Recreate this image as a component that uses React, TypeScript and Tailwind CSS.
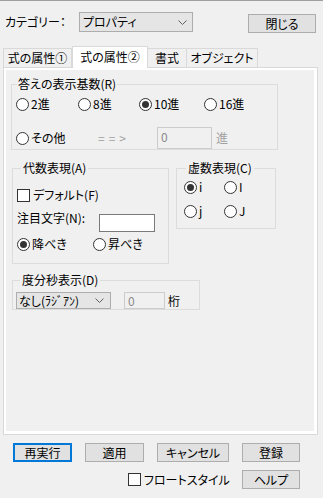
import React from "react";

function Chevron() {
  return (
    <svg width="9" height="5" viewBox="0 0 9 5" className="shrink-0">
      <path d="M0.5 0.5 L4.5 4.5 L8.5 0.5" stroke="#606060" strokeWidth="1" fill="none" />
    </svg>
  );
}

function Radio({ label, checked = false, className = "" }: { label: string; checked?: boolean; className?: string }) {
  return (
    <div className={`flex items-center shrink-0 ${className}`}>
      <span className="w-[13px] h-[13px] rounded-full border border-[#333333] bg-white flex items-center justify-center shrink-0">
        {checked && <span className="w-[7px] h-[7px] rounded-full bg-[#333333]" />}
      </span>
      <span className="ml-[2px] leading-[16px] whitespace-nowrap">{label}</span>
    </div>
  );
}

function Check({ label, className = "" }: { label: string; className?: string }) {
  return (
    <div className={`flex items-center shrink-0 ${className}`}>
      <span className="w-[13px] h-[13px] border border-[#333333] bg-white shrink-0" />
      <span className="ml-[3px] leading-[16px] whitespace-nowrap">{label}</span>
    </div>
  );
}

function Btn({ label, className = "", def = false }: { label: string; className?: string; def?: boolean }) {
  return (
    <div
      className={`h-[19px] flex items-center justify-center bg-[#e1e1e1] leading-[16px] whitespace-nowrap shrink-0 ${
        def ? "border-2 border-[#0078d7]" : "border border-[#adadad]"
      } ${className}`}
    >
      {label}
    </div>
  );
}

export default function App() {
  return (
    <div className="w-[323px] h-[498px] bg-[#f0f0f0] border-t border-[#a0a0a0] text-[12px] text-black [font-family:'Noto_Sans_CJK_JP',sans-serif] [font-feature-settings:'palt'] flex flex-col overflow-hidden">
      {/* top row */}
      <div className="flex items-start pl-[5px]">
        <div className="mt-[11px] h-[20px] leading-[20px] w-[74px] whitespace-nowrap">カテゴリー：</div>
        <div className="mt-[11px] w-[114px] h-[20px] border border-[#adadad] bg-[#e5e5e5] flex items-center justify-between pl-[3px] pr-[5px]">
          <span className="leading-[16px]">プロパティ</span>
          <Chevron />
        </div>
        <Btn label="閉じる" className="mt-[13px] ml-[55px] w-[68px]" />
      </div>

      {/* tabs */}
      <div className="flex items-end mt-[13px] ml-[3px] h-[22px] relative z-10">
        <div className="w-[69px] h-[19px] mb-[1px] border-t border-l border-r border-[#d9d9d9] bg-[#f0f0f0] flex items-center justify-center leading-[16px] whitespace-nowrap">
          式の属性①
        </div>
        <div className="w-[76px] h-[22px] border-t border-l border-r border-[#d9d9d9] bg-white flex items-center justify-center leading-[16px] pb-[2px] whitespace-nowrap">
          式の属性②
        </div>
        <div className="w-[39px] h-[19px] mb-[1px] border-t border-r border-[#d9d9d9] bg-[#f0f0f0] flex items-center justify-center leading-[16px] whitespace-nowrap">
          書式
        </div>
        <div className="w-[71px] h-[19px] mb-[1px] border-t border-r border-[#d9d9d9] bg-[#f0f0f0] flex items-center justify-center leading-[16px] whitespace-nowrap">
          オブジェクト
        </div>
      </div>

      {/* panel */}
      <div className="-mt-[1px] ml-[3px] w-[315px] h-[368px] border border-[#d9d9d9] bg-white pt-[2px] pl-[2px] pr-[3px] pb-[3px]">
        <div className="w-full h-full bg-[#f0f0f0] flex flex-col items-start">
          {/* group 1 */}
          <fieldset className="mt-[6px] ml-[5px] w-[267px] border border-[#dcdcdc] pl-[4px]">
            <legend className="ml-[1px] px-[1px] leading-[16px]">答えの表示基数(R)</legend>
            <div className="mt-[2px] h-[20px] flex items-center">
              <Radio label="2進" className="w-[62px]" />
              <Radio label="8進" className="w-[61px]" />
              <Radio label="10進" checked className="w-[65px]" />
              <Radio label="16進" />
            </div>
            <div className="mt-[13px] h-[22px] flex items-center">
              <Radio label="その他" className="w-[82px]" />
              <div className="w-[59px] text-[#a0a0a0] tracking-[4px] leading-[16px]">==&gt;</div>
              <div className="w-[55px] h-[22px] border border-[#cccccc] bg-[#f0f0f0] text-[#8a8a8a] pl-[3px] leading-[18px]">0</div>
              <div className="ml-[4px] text-[#a0a0a0] leading-[16px]">進</div>
            </div>
          </fieldset>

          {/* groups 2 & 3 */}
          <div className="mt-[10px] flex items-start">
            <fieldset className="ml-[6px] w-[157px] border border-[#dcdcdc] pl-[4px] pb-[9px]">
              <legend className="ml-[4px] px-[2px] leading-[16px]">代数表現(A)</legend>
              <div className="mt-[9px] h-[20px] flex items-center">
                <Check label="デフォルト(F)" />
              </div>
              <div className="mt-[5px] flex items-start">
                <div className="w-[82px] leading-[16px] whitespace-nowrap">注目文字(N):</div>
                <div className="mt-[4px] w-[56px] h-[18px] border border-[#7a7a7a] bg-white" />
              </div>
              <div className="mt-[2px] h-[20px] flex items-center">
                <Radio label="降べき" checked className="w-[76px]" />
                <Radio label="昇べき" />
              </div>
            </fieldset>
            <fieldset className="ml-[7px] w-[100px] border border-[#dcdcdc] pl-[7px] pb-[7px]">
              <legend className="ml-[2px] px-[2px] leading-[16px]">虚数表現(C)</legend>
              <div className="mt-[1px] h-[20px] flex items-center">
                <Radio label="i" checked className="w-[40px]" />
                <Radio label="I" />
              </div>
              <div className="mt-[4px] h-[20px] flex items-center">
                <Radio label="j" className="w-[40px]" />
                <Radio label="J" />
              </div>
            </fieldset>
          </div>

          {/* group 4 */}
          <fieldset className="mt-[8px] ml-[6px] w-[188px] border border-[#dcdcdc] pl-[3px]">
            <legend className="ml-[4px] px-[2px] leading-[16px]">度分秒表示(D)</legend>
            <div className="mt-[4px] h-[17px] flex items-center">
              <div className="w-[95px] h-[17px] border border-[#adadad] bg-[#e5e5e5] flex items-center justify-between pl-[2px] pr-[6px]">
                <span className="leading-[15px] whitespace-nowrap">なし(ﾗｼﾞｱﾝ)</span>
                <Chevron />
              </div>
              <div className="ml-[13px] w-[41px] h-[17px] border border-[#cccccc] bg-[#f0f0f0] text-[#8a8a8a] pl-[3px] leading-[15px]">0</div>
              <div className="ml-[3px] leading-[16px]">桁</div>
            </div>
          </fieldset>
        </div>
      </div>

      {/* bottom buttons */}
      <div className="mt-[8px] pl-[13px] flex items-center gap-[13px]">
        <Btn label="再実行" def className="w-[59px]" />
        <Btn label="適用" className="w-[59px]" />
        <Btn label="キャンセル" className="w-[72px]" />
        <Btn label="登録" className="w-[58px]" />
      </div>
      <div className="mt-[8px] pl-[128px] pr-[23px] flex items-center">
        <Check label="フロートスタイル" />
        <Btn label="ヘルプ" className="ml-auto w-[58px]" />
      </div>
    </div>
  );
}
